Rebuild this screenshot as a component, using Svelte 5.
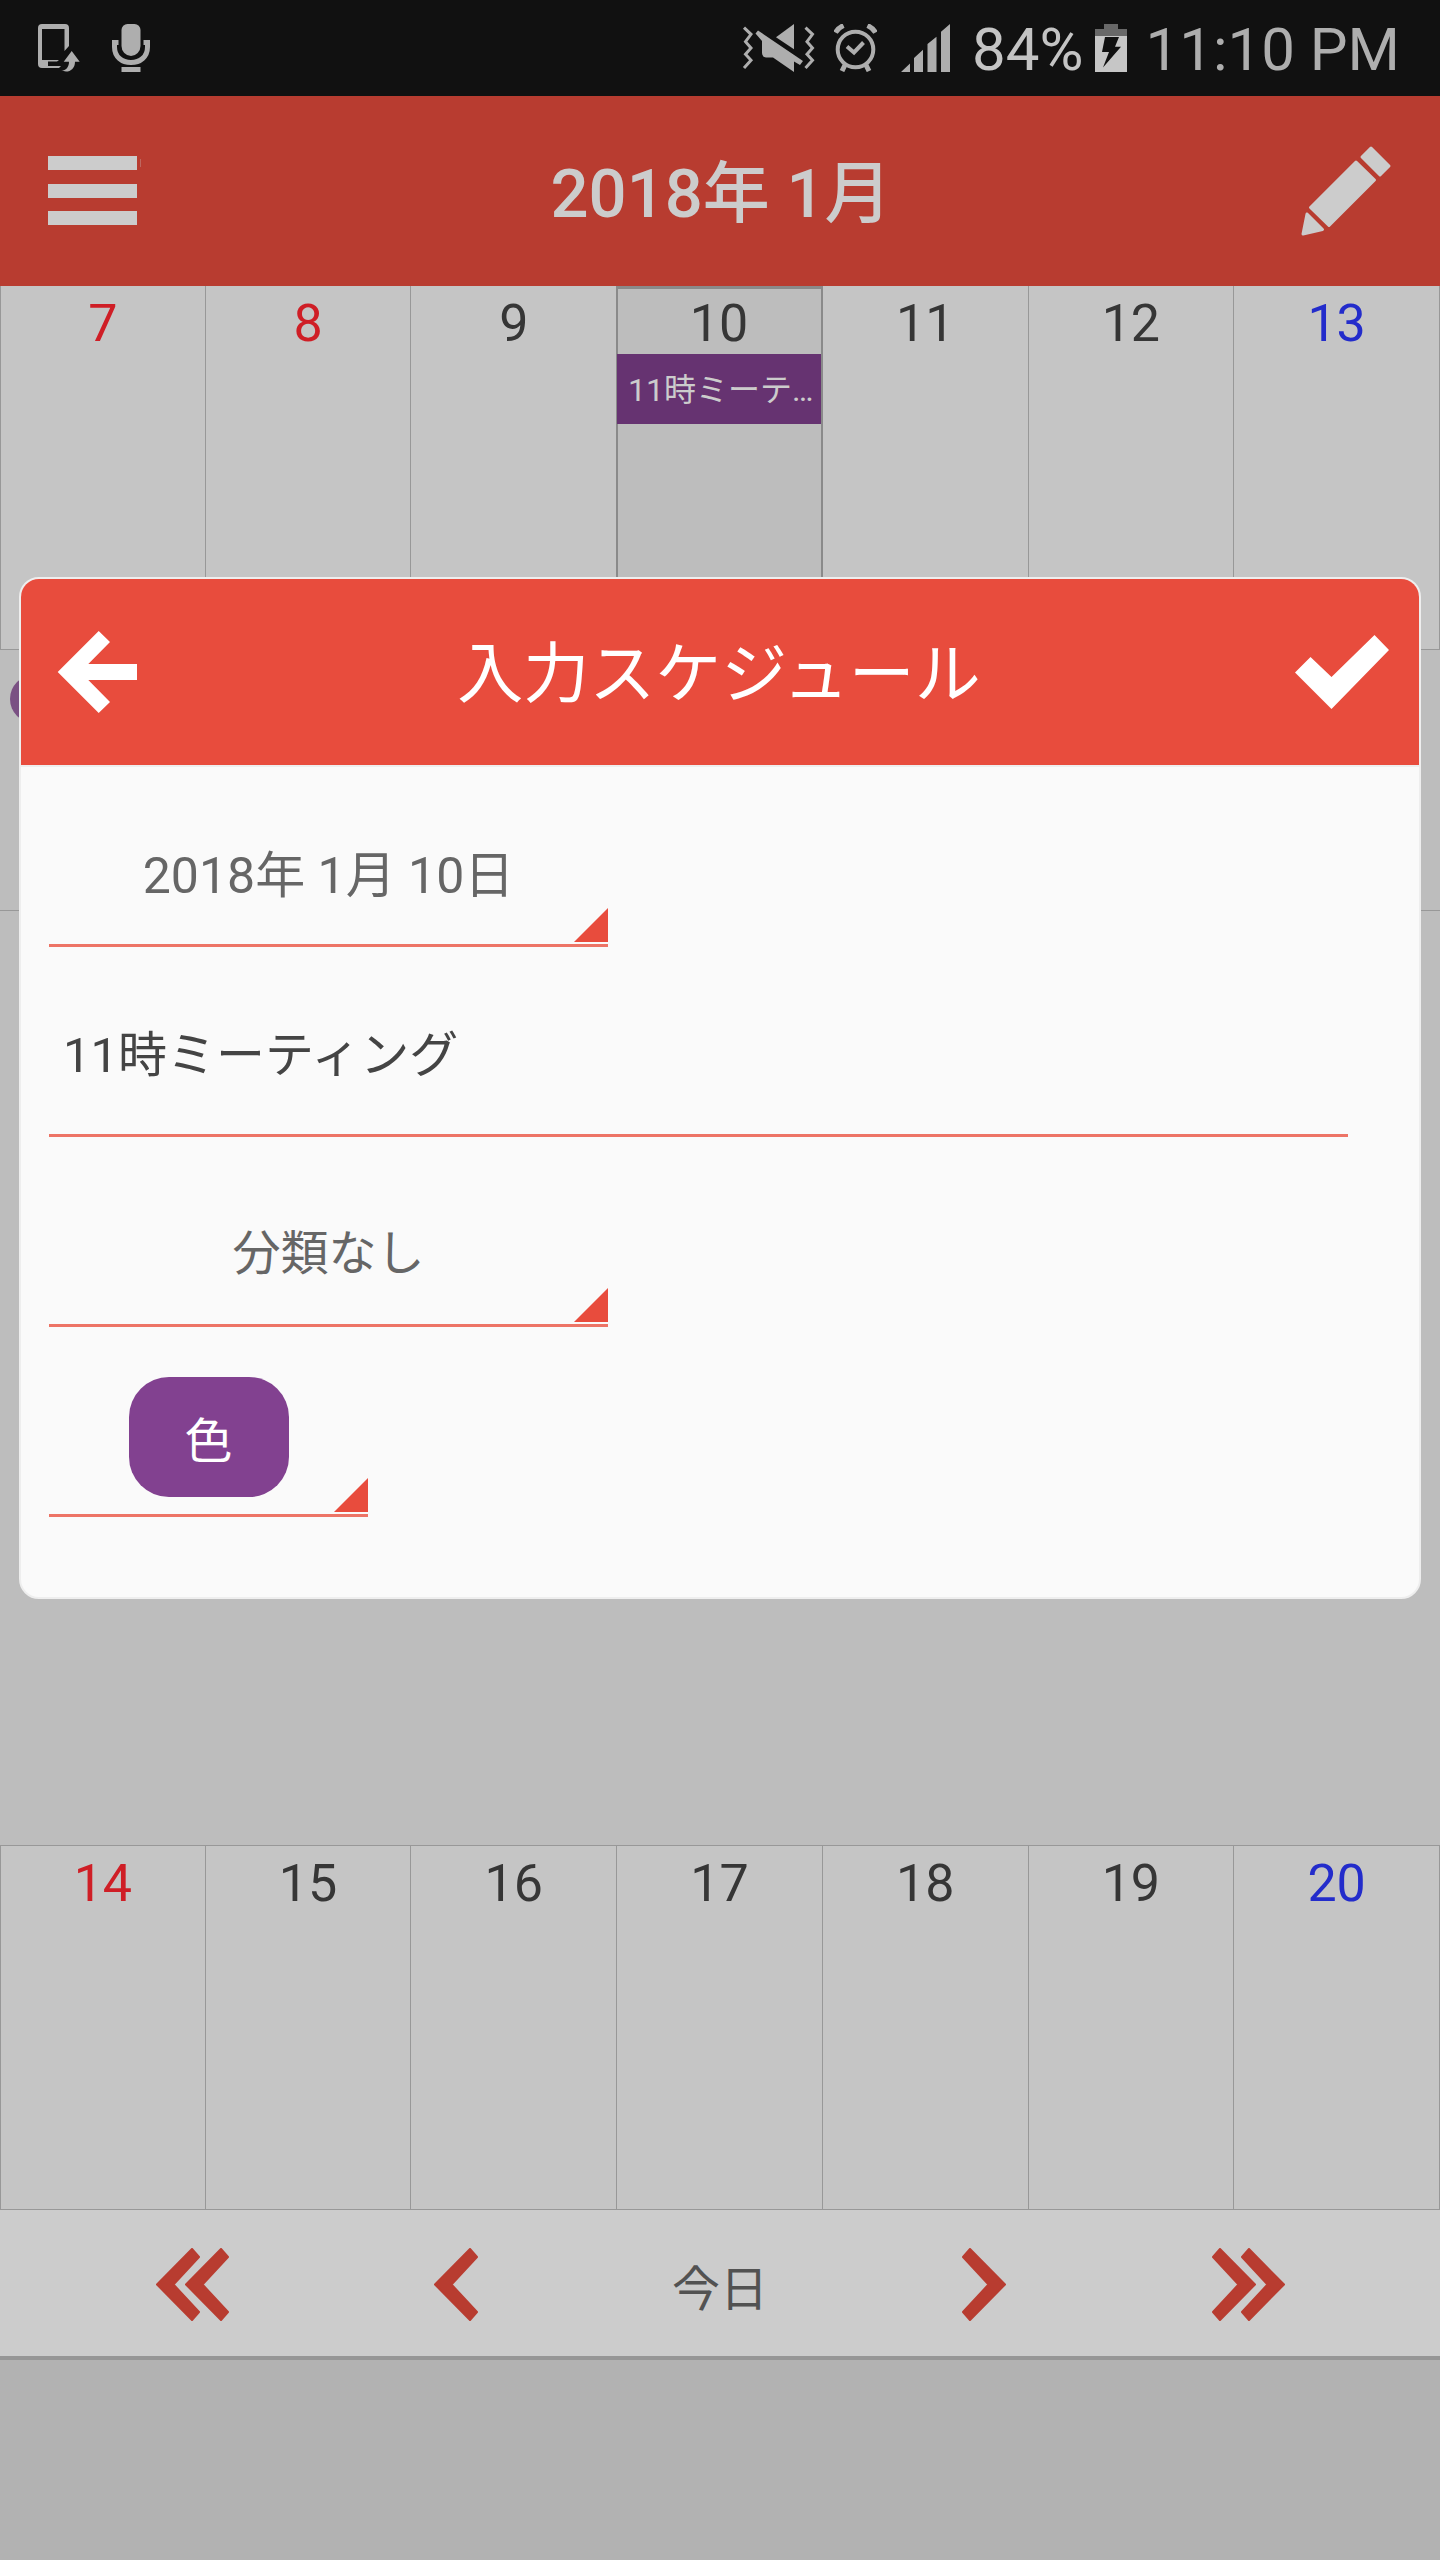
<script lang="ts">
	let title = '11時ミーティング';
	let category = '分類なし';

	const weeks = [
		[
			{ day: 7, kind: 'holiday' },
			{ day: 8, kind: 'holiday' },
			{ day: 9, kind: '' },
			{ day: 10, kind: '', event: '11時ミーティング' },
			{ day: 11, kind: '' },
			{ day: 12, kind: '' },
			{ day: 13, kind: 'saturday' }
		],
		[
			{ day: 14, kind: 'holiday' },
			{ day: 15, kind: '' },
			{ day: 16, kind: '' },
			{ day: 17, kind: '' },
			{ day: 18, kind: '' },
			{ day: 19, kind: '' },
			{ day: 20, kind: 'saturday' }
		]
	];
	const selected = 10;
	const chevron = 'M1 36.5L36 1L43 9L17.5 36.5L43 64L36 72Z';

	const shorten = (text: string) => (text.length > 6 ? text.slice(0, 6) + '…' : text);
</script>

{#snippet week(days)}
	<table class="week">
		<tbody>
			<tr>
				{#each days as d}
					<td class={d.kind} class:selected={d.day === selected}>
						<div class="day">{d.day}</div>
						{#if d.event}
							<div class="event">{shorten(d.event)}</div>
						{/if}
					</td>
				{/each}
			</tr>
		</tbody>
	</table>
{/snippet}

<div class="app">
	<div class="status">
		<svg width="42" height="48" viewBox="0 0 42 48">
			<path d="M31 22V4a4 4 0 0 0-4-4H4a4 4 0 0 0-4 4v36a4 4 0 0 0 4 4h17l2-2H10v-4.500h9l2-1.500H4V5h22.500v22z" />
			<path d="M33.700 27l8 10.700H37C37 44 33 47.500 28 47.500L23.300 46.500C28 46.500 31 43 31 37.700H25.700z" />
		</svg>
		<svg class="mic" width="38" height="48" viewBox="0 0 38 48">
			<path d="M9.500 6a6 6 0 0 1 6-6h7a6 6 0 0 1 6 6v16a9.500 10 0 0 1-19 0z" />
			<path class="line" stroke-width="5" d="M6.500 18.500H2.500V23C2.500 33 10 38.500 19 38.500S35.500 33 35.500 23V18.500H31.500" />
			<rect x="9.500" y="43" width="19" height="5" />
		</svg>
		<div class="status-right">
			<svg width="74" height="48" viewBox="0 0 74 48">
				<path class="line" stroke-width="3" d="M2 3.700L9 10.300L3.500 17.700L9 24L3.500 30.300L9 36.300L2 44M63.500 3.700L70.500 10.300L65 17.700L70.500 24L65 30.300L70.500 36.300L63.500 44" />
				<path d="M52 0V25.300L34 13.300z" />
				<path d="M13.500 9.500L16 6.500L61 37L58 41L52 37.500V48L31 33.500H24Q20 33 20 29V17z" />
			</svg>
			<svg class="alarm" width="43" height="48" viewBox="0 0 43 48">
				<circle class="line" stroke-width="4" cx="21.500" cy="25.500" r="17.800" />
				<path class="line" stroke-width="4" d="M13 22.500L20 28.500L29.500 18.500" />
				<path class="line" stroke-width="5" d="M1.500 8.500Q4 4 9.500 1.500M33.500 1.500Q39 4 41.500 8.500M11 41L8 47M32 41L35 47" />
			</svg>
			<svg width="49" height="48" viewBox="0 0 49 48">
				<path d="M0 48L9 39.500V48zM13 34L22 25.700V48H13zM26.500 20L35.500 12.700V48h-9zM40 7.700L49 0V48h-9z" />
			</svg>
			<span class="percent">84%</span>
			<svg width="32" height="48" viewBox="0 0 32 48">
				<path fill="#686868" d="M9 0h14v5h9v7H0V5h9z" />
				<path fill="#c6c6c6" d="M0 12h32v36H0z" />
				<path fill="#111" d="M10 13H24L20 22.700H26L8 43.500L14 28H7z" />
			</svg>
			<span>11:10 PM</span>
		</div>
	</div>

	<header class="topbar">
		<button aria-label="menu">
			<svg width="96" height="70" viewBox="0 0 96 70">
				<path d="M0 0h89v14H0zM0 28h89v14H0zM0 55h89v14H0z" />
				<path opacity="0.3" d="M92 3h1v8h-1z" />
			</svg>
		</button>
		<h1>2018年 1月</h1>
		<button aria-label="edit">
			<svg width="96" height="94" viewBox="0 0 96 94">
				<g stroke="#ccc" stroke-width="3" stroke-linejoin="round">
					<path d="M64 13L73 4L91 22L82 31z" />
					<path d="M58 18L76.500 36L31 81.500L12.500 63.500z" />
					<path d="M9 70L24.500 85.500L5 90z" />
				</g>
			</svg>
		</button>
	</header>

	{@render week(weeks[0])}
	<ul class="events">
		<li><span class="dot"></span></li>
	</ul>
	{@render week(weeks[1])}

	<nav class="pager">
		<button aria-label="previous year">
			<svg width="73" height="73" viewBox="0 0 73 73">
				<path d={chevron} />
				<path d={chevron} transform="translate(29 0)" />
			</svg>
		</button>
		<button aria-label="previous">
			<svg width="44" height="73" viewBox="0 0 44 73"><path d={chevron} /></svg>
		</button>
		<button class="today">今日</button>
		<button aria-label="next">
			<svg class="flip" width="44" height="73" viewBox="0 0 44 73"><path d={chevron} /></svg>
		</button>
		<button aria-label="next year">
			<svg class="flip" width="73" height="73" viewBox="0 0 73 73">
				<path d={chevron} />
				<path d={chevron} transform="translate(29 0)" />
			</svg>
		</button>
	</nav>
	<div class="bottom"></div>

	<div class="dialog" role="dialog" aria-labelledby="dialog-title">
		<header class="dialog-head">
			<button aria-label="back">
				<svg width="80" height="82" viewBox="0 0 80 82">
					<path d="M0.700 41L41.700 0L53 11L31.300 33H80V49H31.300L53 71L41.700 82z" />
				</svg>
			</button>
			<h2 id="dialog-title">入力スケジュール</h2>
			<button aria-label="save">
				<svg width="94" height="76" viewBox="0 0 94 76">
					<path d="M0 38.500L15.500 23L36.500 43L79.500 1L94 16L36.500 75z" />
				</svg>
			</button>
		</header>
		<form class="fields">
			<div class="field spinner">
				<button type="button" class="date">2018年 1月 10日</button>
			</div>
			<div class="field wide">
				<input type="text" aria-label="スケジュール" bind:value={title} />
			</div>
			<div class="field spinner">
				<select aria-label="分類" bind:value={category}>
					<option>分類なし</option>
				</select>
			</div>
			<div class="field spinner small">
				<button type="button" class="color">色</button>
			</div>
		</form>
	</div>
</div>

<style>
	:global(body) {
		margin: 0;
		background: #b2b2b2;
	}

	.app {
		position: relative;
		display: flex;
		flex-direction: column;
		min-height: 100vh;
		font-family: Roboto, 'Noto Sans CJK JP', sans-serif;
	}

	button,
	input,
	select {
		margin: 0;
		padding: 0;
		border: none;
		border-radius: 0;
		background: transparent;
		font: inherit;
		color: inherit;
		outline: none;
	}

	svg {
		display: block;
		fill: currentColor;
	}

	.line {
		fill: none;
		stroke: currentColor;
	}

	.status {
		display: flex;
		align-items: center;
		height: 96px;
		padding: 0 40px 0 38px;
		background: #111;
		color: #aeaeae;
		font-size: 60px;
		line-height: 92px;
	}

	.mic {
		margin-left: 32px;
	}

	.status-right {
		display: flex;
		align-items: center;
		gap: 18px;
		margin-left: auto;
	}

	.status-right span {
		padding-top: 4px;
	}

	.alarm {
		margin-right: 6px;
	}

	.percent {
		margin: 0 -6px 0 4px;
		color: #c4c4c4;
	}

	.topbar {
		display: flex;
		align-items: center;
		justify-content: space-between;
		height: 190px;
		padding: 0 46px 0 48px;
		background: #b83c30;
		color: #ccc;
	}

	h1 {
		margin: 0;
		padding-bottom: 8px;
		font-size: 67px;
		font-weight: 500;
	}

	.week {
		width: 100%;
		table-layout: fixed;
		border-spacing: 0;
		color: #363636;
	}

	.week td {
		box-sizing: border-box;
		height: 364px;
		padding: 0;
		border-right: 1px solid #989898;
		border-bottom: 1px solid #989898;
		background: #c5c5c5;
		vertical-align: top;
	}

	.week td:first-child {
		border-left: 1px solid #989898;
	}

	.week td.holiday {
		color: #cf1e26;
	}

	.week td.saturday {
		color: #232ccb;
	}

	.week td.selected {
		background: #bdbdbd;
		border-right: 2px solid #8a8a8a;
		box-shadow: -1px 0 #8a8a8a, inset 1px 3px #8a8a8a;
	}

	.day {
		padding-top: 8px;
		font-size: 52px;
		line-height: 60px;
		text-align: center;
	}

	.event {
		height: 70px;
		padding-left: 11px;
		background: #663371;
		color: #ccc;
		font-size: 32px;
		line-height: 72px;
		white-space: nowrap;
	}

	.events {
		flex: 1;
		margin: 0;
		padding: 0;
		border-bottom: 1px solid #989898;
		background: #bdbdbd;
		list-style: none;
	}

	.events li {
		box-sizing: border-box;
		height: 261px;
		padding: 25px 10px;
		border-bottom: 1px solid #989898;
	}

	.dot {
		display: block;
		width: 48px;
		height: 48px;
		border-radius: 50%;
		background: #7a5083;
	}

	.pager {
		display: grid;
		grid-template-columns: repeat(5, 1fr);
		height: 146px;
		padding: 0 60px;
		border-bottom: 4px solid #969696;
		background: #ccc;
		color: #b83c30;
	}

	.pager button {
		padding-top: 3px;
	}

	.pager svg {
		margin: 0 auto;
		stroke: currentColor;
		stroke-width: 2;
		stroke-linejoin: round;
	}

	.flip {
		transform: scaleX(-1);
	}

	.today {
		color: #525252;
		font-size: 48px;
	}

	.bottom {
		height: 200px;
	}

	.dialog {
		position: absolute;
		top: 577px;
		left: 19px;
		right: 19px;
		overflow: hidden;
		border: 2px solid #eee;
		border-radius: 20px;
		background: #fafafa;
	}

	.dialog-head {
		display: flex;
		align-items: center;
		justify-content: space-between;
		height: 186px;
		padding: 0 30px 0 36px;
		border-bottom: 2px solid #eee;
		background: #e84c3d;
		color: #fff;
	}

	h2 {
		margin: 0;
		padding: 0 0 8px 6px;
		font-size: 66px;
		font-weight: 400;
	}

	.fields {
		padding: 0 28px 80px;
	}

	.field {
		position: relative;
		display: flex;
		box-sizing: border-box;
		height: 190px;
		padding-top: 46px;
		border-bottom: 3px solid #ed7466;
		color: #666;
		font-size: 48px;
	}

	.field:first-child {
		height: 180px;
		padding-top: 30px;
	}

	.spinner {
		width: 559px;
	}

	.field.small {
		width: 319px;
		padding-top: 50px;
	}

	.spinner::after {
		content: '';
		position: absolute;
		right: 0;
		bottom: 2px;
		width: 34px;
		height: 34px;
		background: #e84c3d;
		clip-path: polygon(100% 0, 100% 100%, 0 100%);
	}

	.field.wide {
		margin-right: 43px;
		padding-top: 20px;
	}

	.field input {
		flex: 1;
		padding-left: 14px;
		color: #444;
		font-size: 49px;
	}

	.field select {
		flex: 1;
		appearance: none;
		text-align: center;
	}

	.date {
		flex: 1;
		font-size: 50px;
	}

	.color {
		width: 160px;
		height: 120px;
		margin: 0 auto;
		border-radius: 40px;
		background: #824190;
		color: #fff;
	}
</style>
